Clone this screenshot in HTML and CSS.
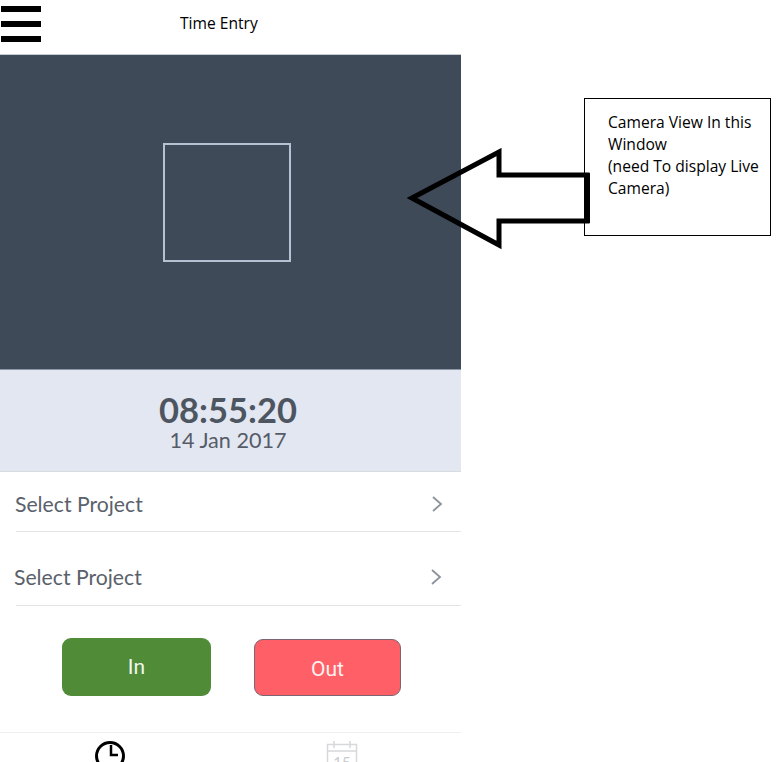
FILE: index.html
```html
<!DOCTYPE html>
<html lang="en">
<head>
<meta charset="UTF-8">
<title>Time Entry</title>
<link rel="stylesheet" href="styles.css">
</head>
<body>
<div class="canvas">
  <div class="phone">
    <!-- Header -->
    <div class="top-bar">
      <div class="burger"><span></span><span></span><span></span></div>
      <div class="top-title">Time Entry</div>
    </div>

    <!-- Camera -->
    <div class="camera">
      <div class="camera-frame"></div>
    </div>

    <!-- Clock -->
    <div class="clock">
      <div class="clock-time">08:55:20</div>
      <div class="clock-date">14 Jan 2017</div>
    </div>

    <!-- Pickers -->
    <div class="picker picker-first">
      <span>Select Project</span>
      <svg class="chevron" width="12" height="18" viewBox="0 0 12 18"><path d="M2 2l8 7-8 7" fill="none" stroke="#8b929b" stroke-width="1.8"/></svg>
    </div>
    <div class="picker picker-second">
      <span>Select Project</span>
      <svg class="chevron" width="12" height="18" viewBox="0 0 12 18"><path d="M2 2l8 7-8 7" fill="none" stroke="#8b929b" stroke-width="1.8"/></svg>
    </div>

    <!-- Buttons -->
    <div class="actions">
      <button class="action action-in">In</button>
      <button class="action action-out">Out</button>
    </div>

    <!-- Tabs -->
    <div class="tabs">
      <div class="tab">
        <svg width="32" height="32" viewBox="0 0 32 32">
          <circle cx="16" cy="16" r="13.5" fill="none" stroke="#000" stroke-width="3"/>
          <path d="M17 5v10h7" fill="none" stroke="#000" stroke-width="2.500"/>
        </svg>
      </div>
      <div class="tab">
        <svg width="32" height="32" viewBox="0 0 32 32" fill="none" stroke="#d6d8da" stroke-width="1.5">
          <rect x="1.5" y="4.500" width="29" height="27"/>
          <path d="M1.500 11h29M8 1v7M24 1v7"/>
          <text x="16" y="28" text-anchor="middle" class="tab-day">15</text>
        </svg>
      </div>
    </div>
  </div>

  <!-- Annotation over the mockup -->
  <div class="note">Camera View In this Window<br>(need To display Live Camera)</div>
  <svg class="note-arrow" width="190" height="108" viewBox="0 0 190 108">
    <path d="M5 50L92 4V27H180V73H92V97Z" fill="none" stroke="#000" stroke-width="5"/>
    <path d="M180 25V75" stroke="#000" stroke-width="6"/>
  </svg>
</div>
</body>
</html>
```

FILE: styles.css
```css
html, body {
  margin:0; padding:0;
  height:100%;
  background:#fff;
  overflow:hidden;
}

.canvas {position:relative; width:777px; height:762px; overflow:hidden;}

.phone {
  width:461px; height:762px;
  display:flex; flex-direction:column;
  font-family:'Lato', sans-serif;
  color:#4f5661;
}

/* Header */
.top-bar {
  height:54px; flex:none;
  border-bottom:1px solid #c5ccd2;
  position:relative;
}
.burger {display:flex; flex-direction:column; gap:9px; width:40px; padding:6px 0 0 1px;}
.burger span {display:block; height:6px; background:#000;}
.top-title {
  position:absolute; left:180px; top:13px;
  font-family:'Open Sans', sans-serif; font-size:15.6px; line-height:20px; color:#000;
}

/* Camera */
.camera {
  height:314px; flex:none;
  background:#3f4a59;
  display:flex; justify-content:center; padding-top:88px; box-sizing:border-box;
}
.camera-frame {
  width:124px; height:115px;
  border:2px solid #b5c2d3;
  margin-left:-7px;
}

/* Clock */
.clock {
  height:103px; flex:none; box-sizing:border-box;
  background:#e3e7f1;
  border-top:1px solid #8d98a6;
  border-bottom:1px solid #d8dbe0;
  text-align:center;
  padding:22px 5px 0 0;
}
.clock-time {font-size:34.500px; font-weight:700; line-height:36px; color:#4c5560;}
.clock-date {font-size:21.6px; line-height:24px; color:#555c68;}

/* Pickers */
.picker {
  flex:none;
  display:flex; justify-content:space-between; align-items:center;
  box-sizing:border-box;
  font-size:21.2px;
  color:#5a616b;
  border-bottom:1px solid #e3e4e6;
  margin-left:16px;
  padding-right:18px;
}
.picker span {margin-left:-1px;}
.picker-first {height:60px; padding-top:4px;}
.picker-second {height:74px; padding-top:16px; padding-right:19px;}
.picker-second span {margin-left:-2px;}

/* Buttons */
.actions {flex:none; display:flex; gap:43px; padding:32px 0 0 62px; height:94px;}
.action {
  height:58px; border-radius:9px;
  font-family:'Roboto', sans-serif; font-size:21px;
  color:#f4f7f1;
  padding:0;
}
.action-in {width:149px; background:#508b37; border:none; padding-bottom:1px;}
.action-out {width:147px; background:#ff5f66; border:1px solid #7d6472; margin-top:1px; height:57px; color:#fff2f0; padding-top:2px;}

/* Tabs */
.tabs {
  flex:none;
  display:flex;
  border-top:1px solid #f0f0f0;
  padding-top:7px;
}
.tab {width:230px; display:flex; justify-content:center;}
.tab:first-child {padding-right:10px; box-sizing:border-box;}
.tab:last-child {margin-left:-3px;}
.tab-day {font-family:'Lato', sans-serif; font-size:15px; fill:#c9cbce; stroke:none;}

/* Annotation */
.note {
  position:absolute; left:584px; top:98px;
  width:187px; height:138px; box-sizing:border-box;
  border:1px solid #000;
  background:#fff;
  padding:12px 4px 0 23px;
  font-family:'Open Sans', sans-serif; font-size:15.6px; line-height:22px; color:#000;
}
.note-arrow {position:absolute; left:407px; top:148px; z-index:2;}
```
